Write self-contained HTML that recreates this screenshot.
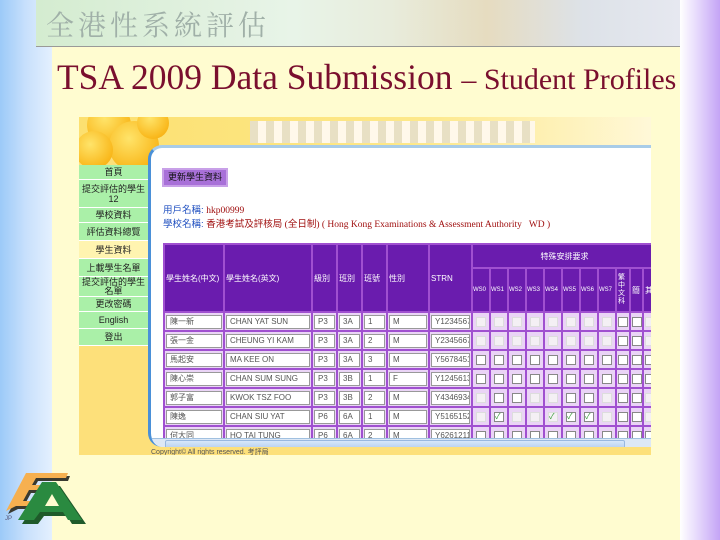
<!DOCTYPE html>
<html><head><meta charset="utf-8"><style>
*{margin:0;padding:0;box-sizing:border-box}
body{width:720px;height:540px;overflow:hidden;position:relative;background:#fffcd0;font-family:"Liberation Sans","Noto Sans CJK TC",sans-serif}
.lstrip{position:absolute;left:0;top:0;width:52px;height:540px;background:linear-gradient(90deg,#9ccaf8 0%,#c8e0fc 50%,#e4f0fe 100%)}
.rstrip{position:absolute;left:680px;top:0;width:40px;height:540px;background:linear-gradient(90deg,#fff 0%,#e8dcfc 40%,#c4a4f6 100%)}
.hdr{position:absolute;left:36px;top:0;width:644px;height:47px;background:linear-gradient(90deg,#d4ecd0 0%,#e8f4e8 40%,#e8ecdc 55%,#e6dcc0 70%,#dde2e8 85%,#e6e8f0 100%);border-bottom:1px solid #9a9a98}
.hdr span{position:absolute;left:10px;top:4px;font-family:"Noto Serif CJK SC",serif;font-size:28px;color:#a0b0a8;letter-spacing:4px}
.title{position:absolute;left:57px;top:56px;font-family:"Liberation Serif",serif;font-size:35.5px;color:#7a0f2e;white-space:nowrap}
.title small{font-size:30px}
.shot{position:absolute;left:79px;top:117px;width:572px;height:338px;background:#fde07a;overflow:hidden}
.banner{position:absolute;left:0;top:0;width:572px;height:30px;background:linear-gradient(90deg,#fce070 0%,#fde88a 60%,#fff8d8 100%)}
.ball{position:absolute;border-radius:50%;background:radial-gradient(circle at 40% 35%,#ffe46a,#f9b81c 70%,#f0a010)}
.strip{position:absolute;left:171px;top:4px;width:285px;height:22px;background:repeating-linear-gradient(90deg,#e8e0c4 0 8px,#fff8ea 8px 16px)}
.nav{position:absolute;left:0;top:48px;width:69px}
.nav div{background:#aaf0a8;border-bottom:1px solid #fff;text-align:center;font-size:9px;color:#222;line-height:10px;display:flex;align-items:center;justify-content:center;overflow:hidden}
.nav div.sel{background:#fff4b0}
.panel{position:absolute;left:69px;top:28px;width:510px;height:302px;background:#fff;border-left:3px solid #4a90d8;border-top:3px solid #a8cce8;border-radius:14px 0 0 14px;overflow:hidden}
.btn{position:absolute;left:11px;top:20px;width:66px;height:19px;border:2px solid #c8a0e8;background:#a870d8;font-size:9px;line-height:15px;text-align:center;color:#111}
.info{position:absolute;left:12px;top:56px;font-size:9.5px;color:#2050c0;line-height:14px;white-space:nowrap}
.info b{color:#a01010;font-family:"Liberation Serif",serif;font-weight:normal}
table{position:absolute;left:12px;top:95px;width:493px;border-collapse:collapse;table-layout:fixed;background:#ead4f6}
td,th{border:2px solid #a050d0;font-size:8px;height:19px;padding:1px;white-space:nowrap;overflow:hidden;color:#333;font-weight:normal}
th{background:#6a1cae;color:#fff;text-align:left;font-size:8px}
.in{background:#fff;border:1px solid #999;height:14px;line-height:12px;padding-left:3px;font-size:8px;color:#555;overflow:hidden}
.cb{width:10px;height:10px;border:1px solid #888;background:#fff;margin:auto}
.cb.g{border-color:#ddd;background:#f4f0f4}
.scroll{position:absolute;left:0;top:290px;width:510px;height:12px;background:#dde8f6;border-top:1px solid #a0c0e0}
.thumb{position:absolute;left:14px;top:292px;width:460px;height:9px;background:linear-gradient(#d8e8fa,#b8d0f0);border:1px solid #98b8e0;border-radius:2px}
.foot{position:absolute;left:72px;top:330px;font-size:7px;color:#555}
.logo{position:absolute;left:0;top:466px}
</style></head><body>
<div class="lstrip"></div><div class="rstrip"></div>
<div class="hdr"><span>全港性系統評估</span></div>
<div class="title">TSA 2009 Data Submission <small>– Student Profiles</small></div>
<div class="shot">
 <div class="banner"></div>
 <div class="ball" style="left:8px;top:-14px;width:44px;height:44px"></div>
 <div class="ball" style="left:30px;top:4px;width:50px;height:50px"></div>
 <div class="ball" style="left:-4px;top:14px;width:38px;height:38px"></div>
 <div class="ball" style="left:58px;top:-10px;width:32px;height:32px"></div>
 <div class="strip"></div>
 <div class="panel">
  <div class="btn">更新學生資料</div>
  <div class="info">用戶名稱: <b>hkp00999</b><br>學校名稱: <b>香港考試及評核局 (全日制) ( Hong Kong Examinations &amp; Assessment Authority &nbsp; WD )</b></div>
  <table>
  <colgroup><col style="width:60px"><col style="width:88px"><col style="width:25px"><col style="width:25px"><col style="width:25px"><col style="width:42px"><col style="width:43px"><col span="8" style="width:18px"><col style="width:14px"><col style="width:13px"><col style="width:14px"></colgroup>
  <tr><th rowspan="2">學生姓名(中文)</th><th rowspan="2">學生姓名(英文)</th><th rowspan="2">級別</th><th rowspan="2">班別</th><th rowspan="2">班號</th><th rowspan="2">性別</th><th rowspan="2">STRN</th><th colspan="11" style="text-align:center;height:24px">特殊安排要求</th></tr>
  <tr><th style="height:44px;font-size:6px;padding:0">WS0</th><th style="font-size:6px;padding:0">WS1</th><th style="font-size:6px;padding:0">WS2</th><th style="font-size:6px;padding:0">WS3</th><th style="font-size:6px;padding:0">WS4</th><th style="font-size:6px;padding:0">WS5</th><th style="font-size:6px;padding:0">WS6</th><th style="font-size:6px;padding:0">WS7</th><th style="font-size:7px;white-space:normal;line-height:8px">繁中文科</th><th>簡</th><th>其</th></tr>
  <tr><td><div class="in">陳一新</div></td><td><div class="in">CHAN YAT SUN</div></td><td><div class="in">P3</div></td><td><div class="in">3A</div></td><td><div class="in">1</div></td><td><div class="in">M</div></td><td><div class="in">Y1234567</div></td><td><div class="cb g"></div></td><td><div class="cb g"></div></td><td><div class="cb g"></div></td><td><div class="cb g"></div></td><td><div class="cb g"></div></td><td><div class="cb g"></div></td><td><div class="cb g"></div></td><td><div class="cb g"></div></td><td><div class="cb"></div></td><td><div class="cb"></div></td><td><div class="cb g"></div></td></tr>
  <tr><td><div class="in">張一金</div></td><td><div class="in">CHEUNG YI KAM</div></td><td><div class="in">P3</div></td><td><div class="in">3A</div></td><td><div class="in">2</div></td><td><div class="in">M</div></td><td><div class="in">Y2345667</div></td><td><div class="cb g"></div></td><td><div class="cb g"></div></td><td><div class="cb g"></div></td><td><div class="cb g"></div></td><td><div class="cb g"></div></td><td><div class="cb g"></div></td><td><div class="cb g"></div></td><td><div class="cb g"></div></td><td><div class="cb"></div></td><td><div class="cb"></div></td><td><div class="cb g"></div></td></tr>
  <tr><td><div class="in">馬起安</div></td><td><div class="in">MA KEE ON</div></td><td><div class="in">P3</div></td><td><div class="in">3A</div></td><td><div class="in">3</div></td><td><div class="in">M</div></td><td><div class="in">Y5678451</div></td><td><div class="cb"></div></td><td><div class="cb"></div></td><td><div class="cb"></div></td><td><div class="cb"></div></td><td><div class="cb"></div></td><td><div class="cb"></div></td><td><div class="cb"></div></td><td><div class="cb"></div></td><td><div class="cb"></div></td><td><div class="cb"></div></td><td><div class="cb"></div></td></tr>
  <tr><td><div class="in">陳心崇</div></td><td><div class="in">CHAN SUM SUNG</div></td><td><div class="in">P3</div></td><td><div class="in">3B</div></td><td><div class="in">1</div></td><td><div class="in">F</div></td><td><div class="in">Y1245613</div></td><td><div class="cb"></div></td><td><div class="cb"></div></td><td><div class="cb"></div></td><td><div class="cb"></div></td><td><div class="cb"></div></td><td><div class="cb"></div></td><td><div class="cb"></div></td><td><div class="cb"></div></td><td><div class="cb"></div></td><td><div class="cb"></div></td><td><div class="cb"></div></td></tr>
  <tr><td><div class="in">郭子富</div></td><td><div class="in">KWOK TSZ FOO</div></td><td><div class="in">P3</div></td><td><div class="in">3B</div></td><td><div class="in">2</div></td><td><div class="in">M</div></td><td><div class="in">Y4346934</div></td><td><div class="cb g"></div></td><td><div class="cb"></div></td><td><div class="cb"></div></td><td><div class="cb g"></div></td><td><div class="cb g"></div></td><td><div class="cb"></div></td><td><div class="cb"></div></td><td><div class="cb g"></div></td><td><div class="cb"></div></td><td><div class="cb"></div></td><td><div class="cb g"></div></td></tr>
  <tr><td><div class="in">陳逸</div></td><td><div class="in">CHAN SIU YAT</div></td><td><div class="in">P6</div></td><td><div class="in">6A</div></td><td><div class="in">1</div></td><td><div class="in">M</div></td><td><div class="in">Y5165152</div></td><td><div class="cb g"></div></td><td><div class="cb" style="color:#393;font-size:8px;line-height:8px">✓</div></td><td><div class="cb g"></div></td><td><div class="cb g"></div></td><td><div class="cb g" style="color:#393;font-size:8px;line-height:8px">✓</div></td><td><div class="cb" style="color:#393;font-size:8px;line-height:8px">✓</div></td><td><div class="cb" style="color:#393;font-size:8px;line-height:8px">✓</div></td><td><div class="cb g"></div></td><td><div class="cb"></div></td><td><div class="cb"></div></td><td><div class="cb g"></div></td></tr>
  <tr><td><div class="in">何大同</div></td><td><div class="in">HO TAI TUNG</div></td><td><div class="in">P6</div></td><td><div class="in">6A</div></td><td><div class="in">2</div></td><td><div class="in">M</div></td><td><div class="in">Y6261211</div></td><td><div class="cb"></div></td><td><div class="cb"></div></td><td><div class="cb"></div></td><td><div class="cb"></div></td><td><div class="cb"></div></td><td><div class="cb"></div></td><td><div class="cb"></div></td><td><div class="cb"></div></td><td><div class="cb"></div></td><td><div class="cb"></div></td><td><div class="cb"></div></td></tr>
  </table>
  <div class="scroll"></div>
  <div class="thumb"></div>
 </div>
 <div class="nav">
  <div style="height:15px">首頁</div><div style="height:28px">提交評估的學生<br>12</div><div style="height:15px">學校資料</div><div style="height:18px">評估資料總覽</div><div class="sel" style="height:18px">學生資料</div><div style="height:18px">上載學生名單</div><div style="height:20px;line-height:9px">提交評估的學生<br>名單</div><div style="height:15px">更改密碼</div><div style="height:17px">English</div><div style="height:17px">登出</div>
 </div>
 <div class="foot">Copyright© All rights reserved. 考評局</div>
</div>
<svg class="logo" width="95" height="60" viewBox="0 0 95 60">
 <polygon points="8,48 28,10 70,10 68,15 38,15 34,22 56,22 54,27 31,27 25,38 48,38 46,43 18,43" fill="#3a3a30"/>
 <polygon points="6,45 26,7 68,7 66,12 36,12 32,19 54,19 52,24 29,24 23,35 46,35 44,40 16,40" fill="#f6b050"/>
 <polygon points="22,58 46,20 60,20 86,58 72,58 67,50 44,50 38,58" fill="#1f5a2a"/>
 <polygon points="18,54 42,16 56,16 82,54 68,54 63,46 40,46 34,54" fill="#2a8a40"/>
 <polygon points="45,40 59,40 52,28" fill="#fffcd0"/>
 <text x="5" y="54" font-size="6" fill="#557" font-family="Liberation Sans">JP</text>
</svg>
</body></html>
